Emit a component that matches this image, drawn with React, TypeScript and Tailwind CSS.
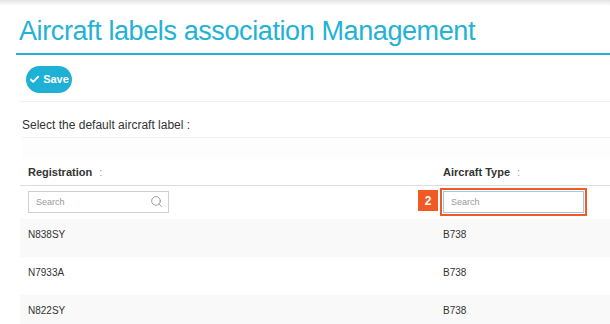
import { Check, Search } from 'lucide-react';

const rows = [
  { reg: 'N838SY', type: 'B738' },
  { reg: 'N7933A', type: 'B738' },
  { reg: 'N822SY', type: 'B738' },
];

const App = () => {
  return (
    <main className="min-h-screen bg-white overflow-hidden" style={{ fontFamily: '"Liberation Sans", Arial, sans-serif' }}>
      <div className="h-[6px] bg-gradient-to-b from-[#e4e4e4] to-white" />
      <header className="pl-4 pt-[7px]">
        <h1 className="text-[27px] leading-[36px] text-[#23b2d6] pl-[3px] border-b-2 border-[#23b2d6] pb-[4px] tracking-[-0.4px]">
          Aircraft labels association Management
        </h1>
      </header>

      <div className="pl-5">
        <div className="border-b border-[#f0f0f0] pt-[11px] pb-[8px]">
          <button className="ml-[6px] h-[27px] w-[46px] rounded-full bg-[#1fb0d5] text-white text-[11px] font-bold flex items-center justify-center gap-[3px]">
            <Check size={11} strokeWidth={4} />
            Save
          </button>
        </div>

        <p className="text-[12px] text-[#333] pl-[2px] pt-[16px] leading-[14px]">Select the default aircraft label :</p>
        <div className="mt-[5px] h-[22px] pl-[2px]">
          <div className="h-full border-t border-[#f2f2f2] bg-[#fdfdfd]" />
        </div>

        <table className="w-full border-collapse">
          <thead>
            <tr className="border-b border-[#dddddd]">
              <th className="w-[415px] text-left pl-2 h-[26px] text-[11px] font-bold text-[#333]">
                Registration <span className="ml-[4px] text-[#999] font-normal">:</span>
              </th>
              <th className="text-left pl-2 text-[11px] font-bold text-[#333]">
                Aircraft Type <span className="ml-[4px] text-[#999] font-normal">:</span>
              </th>
            </tr>
            <tr>
              <td className="pl-2 h-[34px]">
                <div className="relative w-[141px] h-[22px] border border-[#cfcfcf] bg-white flex items-center pl-[7px]">
                  <span className="text-[9px] text-[#999]">Search</span>
                  <Search size={13} strokeWidth={1.3} className="absolute right-[5px] top-[3px] text-[#777]" />
                </div>
              </td>
              <td className="pl-2">
                <div className="relative w-[141px]">
                  <div className="absolute left-[-25px] top-[-1px] w-[20px] h-[21px] bg-[#f15a24] text-white text-[12px] font-bold flex items-center justify-center">
                    2
                  </div>
                  <div className="outline-2 outline-[#f15a24] outline-offset-[1px] w-[141px] h-[22px] border border-[#9fc9e6] bg-white flex items-center pl-[7px]">
                    <span className="text-[9px] text-[#999]">Search</span>
                  </div>
                </div>
              </td>
            </tr>
          </thead>
          <tbody>
            {rows.map((r, i) => (
              <tr key={r.reg} className={i % 2 === 0 ? 'bg-[#f9f9f9]' : 'bg-white'}>
                <td className="pl-2 h-[38px] align-top pt-[8px] text-[10px] text-[#333]">{r.reg}</td>
                <td className="pl-2 align-top pt-[8px] text-[10px] text-[#333]">{r.type}</td>
              </tr>
            ))}
          </tbody>
        </table>
      </div>
    </main>
  );
};

export default App;
